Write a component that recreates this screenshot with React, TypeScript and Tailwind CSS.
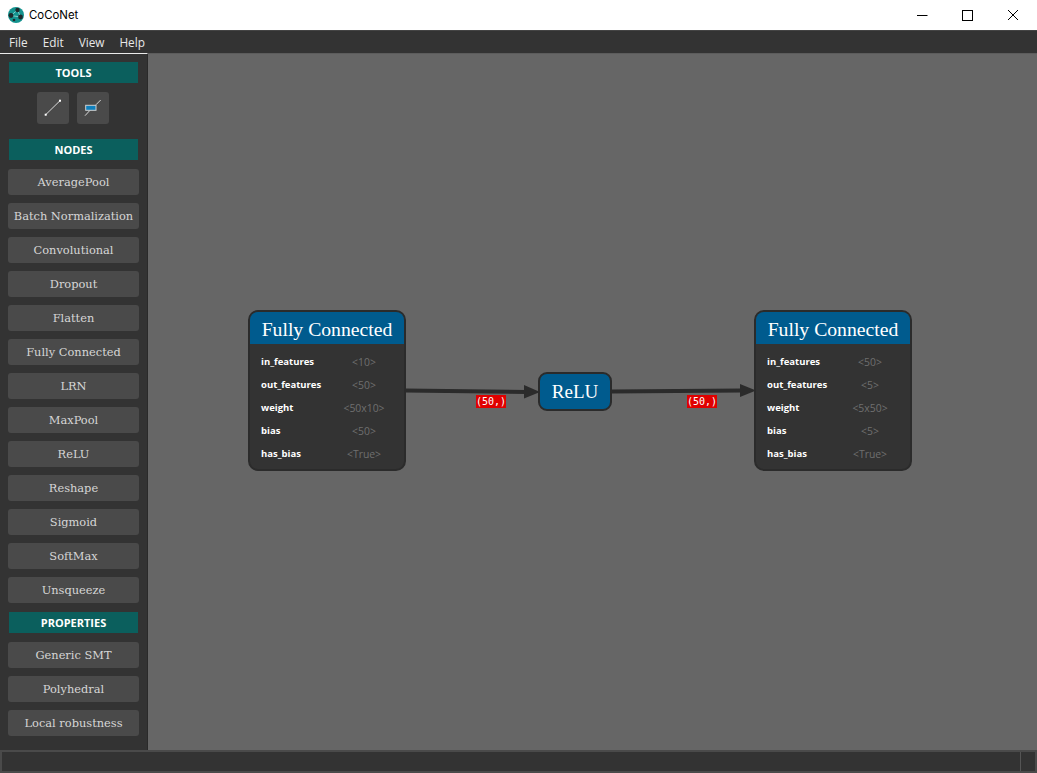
import React from "react";

const nodes = ["AveragePool","Batch Normalization","Convolutional","Dropout","Flatten","Fully Connected","LRN","MaxPool","ReLU","Reshape","Sigmoid","SoftMax","Unsqueeze"];
const props = ["Generic SMT","Polyhedral","Local robustness"];
const serif = "font-['DejaVu_Serif',serif]";
const sans = "font-['Open_Sans','Noto_Sans',sans-serif]";

function Header({ t }: { t: string }) {
  return <div className={`mx-[9px] h-[21px] pt-[2px] bg-[#0b5f5d] text-white text-[11px] font-bold flex items-center justify-center ${sans}`}>{t}</div>;
}
function Btn({ t }: { t: string }) {
  return <div className={`mx-2 h-[26px] pt-[2px] shrink-0 rounded-[3px] bg-[#4a4a4a] text-[#d6d6d6] text-[11.4px] flex items-center justify-center whitespace-nowrap ${serif}`}>{t}</div>;
}
function FC({ left, rows }: { left: number; rows: [string, string][] }) {
  return (
    <div className="absolute top-[256px] w-[158px] h-[161px] rounded-[10px] border-2 border-[#2b2b2b] bg-[#333333] overflow-hidden" style={{ left }}>
      <div className="h-[32px] pt-[3px] bg-[#005b8e] text-white text-[19.7px] flex items-center justify-center whitespace-nowrap font-['Liberation_Serif',serif]">
        Fully Connected
      </div>
      <div className={`pt-[7px] ${sans}`}>
        {rows.map(([a, b]) => (
          <div key={a} className="h-[23px] flex items-center text-[9.5px]">
            <span className="w-[90px] pl-[11px] font-bold text-white whitespace-nowrap">{a}</span>
            <span className="w-[48px] text-center text-[10.4px] text-[#6f6f6f] whitespace-nowrap">{b}</span>
          </div>
        ))}
      </div>
    </div>
  );
}
function Tag({ left, top }: { left: number; top: number }) {
  return <div className="absolute w-[30px] h-[13px] bg-[#e00000] text-white text-[10px] leading-[13px] text-center font-['DejaVu_Sans_Mono',monospace]" style={{ left, top }}>(50,)</div>;
}

export default function App() {
  return (
    <div className="w-[1037px] h-[773px] overflow-hidden bg-[#333333] flex flex-col">
      <div className="h-[30px] shrink-0 bg-white flex items-center justify-between">
        <div className="flex items-center pl-2">
          <svg width="16" height="16" viewBox="0 0 16 16">
            <circle cx="8" cy="8" r="8" fill="#14938f" />
            <path d="M3 8.5L9.5 3M9.5 3L12.5 10M3 8.5L12.5 10" stroke="#7fd0cc" strokeWidth="1" />
            <circle cx="3" cy="8.5" r="2.4" fill="#1f2a2c" />
            <circle cx="9.5" cy="3" r="2.2" fill="#1f2a2c" />
            <circle cx="12.5" cy="10" r="2.4" fill="#1f2a2c" />
            <circle cx="6" cy="13" r="1.3" fill="#1f2a2c" />
          </svg>
          <span className="ml-[5px] pt-[1px] text-[11.4px] text-black font-['Inter','Open_Sans',sans-serif]">CoCoNet</span>
        </div>
        <div className="flex items-center">
          <svg className="mr-[34px]" width="11" height="11" viewBox="0 0 11 11"><path d="M0 5.5H10.5" stroke="#000" strokeWidth="1" /></svg>
          <svg className="mr-[34px]" width="11" height="11" viewBox="0 0 11 11"><rect x="0.5" y="0.5" width="10" height="10" fill="none" stroke="#000" strokeWidth="1" /></svg>
          <svg className="mr-[18px]" width="12" height="12" viewBox="0 0 12 12"><path d="M1 1L11 11M11 1L1 11" stroke="#000" strokeWidth="1" /></svg>
        </div>
      </div>

      <div className={`h-[23px] shrink-0 pt-[1px] flex items-center border-t border-[#444444] text-[11.8px] text-[#e8e8e8] ${sans}`}>
        <span className="ml-[9px]">File</span>
        <span className="ml-[15px]">Edit</span>
        <span className="ml-[15px]">View</span>
        <span className="ml-[15px]">Help</span>
      </div>

      <div className="flex h-[697px] shrink-0">
        <div className="w-[148px] shrink-0 border-t border-white/90 border-r border-r-[#2a2a2a] flex flex-col pt-2 bg-[#333333]">
          <Header t="TOOLS" />
          <div className="flex justify-center gap-2 mt-[9px] h-[32px] -ml-[1px]">
            <div className="w-8 h-8 rounded-[3px] bg-[#4a4a4a] flex items-center justify-center">
              <svg width="20" height="20" viewBox="0 0 20 20"><path d="M2.7 16.7L17 2.7" stroke="#dcdcdc" strokeWidth="1" /><rect x="1.7" y="15.7" width="2" height="2" fill="#fff" /><rect x="16" y="1.7" width="2" height="2" fill="#fff" /></svg>
            </div>
            <div className="w-8 h-8 rounded-[3px] bg-[#4a4a4a] flex items-center justify-center">
              <svg width="20" height="20" viewBox="0 0 20 20"><path d="M13 6.7L17.7 2M7 12.3L2 17.7" stroke="#d8d8d8" strokeWidth="1" /><rect x="2.7" y="7.3" width="10.3" height="5" fill="#0f7fbc" stroke="#d0d0d0" strokeWidth="1" /></svg>
            </div>
          </div>
          <div className="mt-[15px]"><Header t="NODES" /></div>
          <div className="flex flex-col gap-2 mt-[9px]">
            {nodes.map((n) => <Btn key={n} t={n} />)}
          </div>
          <div className="mt-[9px]"><Header t="PROPERTIES" /></div>
          <div className="flex flex-col gap-2 mt-[9px]">
            {props.map((n) => <Btn key={n} t={n} />)}
          </div>
        </div>

        <div className="flex-1 relative bg-[#666666] border-t border-[#5c5c5c]">
          <svg className="absolute left-0 top-[-1px]" width="889" height="697" viewBox="148 53 889 697">
            <path d="M405 390.5L526 392" stroke="#2b2b2b" strokeWidth="4" fill="none" />
            <path d="M524 385L540 392L524 398.5Z" fill="#2b2b2b" />
            <path d="M611 391.5L742 390.5" stroke="#2b2b2b" strokeWidth="4" fill="none" />
            <path d="M740 384L756 390.5L740 397Z" fill="#2b2b2b" />
          </svg>
          <FC left={100} rows={[["in_features","<10>"],["out_features","<50>"],["weight","<50x10>"],["bias","<50>"],["has_bias","<True>"]]} />
          <FC left={606} rows={[["in_features","<50>"],["out_features","<5>"],["weight","<5x50>"],["bias","<5>"],["has_bias","<True>"]]} />
          <div className="absolute left-[390px] top-[318px] w-[74px] h-[39px] pt-[2px] rounded-[9px] border-2 border-[#2b2b2b] bg-[#005b8e] text-white text-[19px] flex items-center justify-center font-['Liberation_Serif',serif]">
            ReLU
          </div>
          <Tag left={328} top={341} />
          <Tag left={539} top={341} />
        </div>
      </div>

      <div className="h-[23px] shrink-0 bg-[#333333] border-2 border-[#4a4a4a] flex justify-end">
        <div className="w-[15px] h-full border-l border-[#555555]" />
      </div>
    </div>
  );
}
